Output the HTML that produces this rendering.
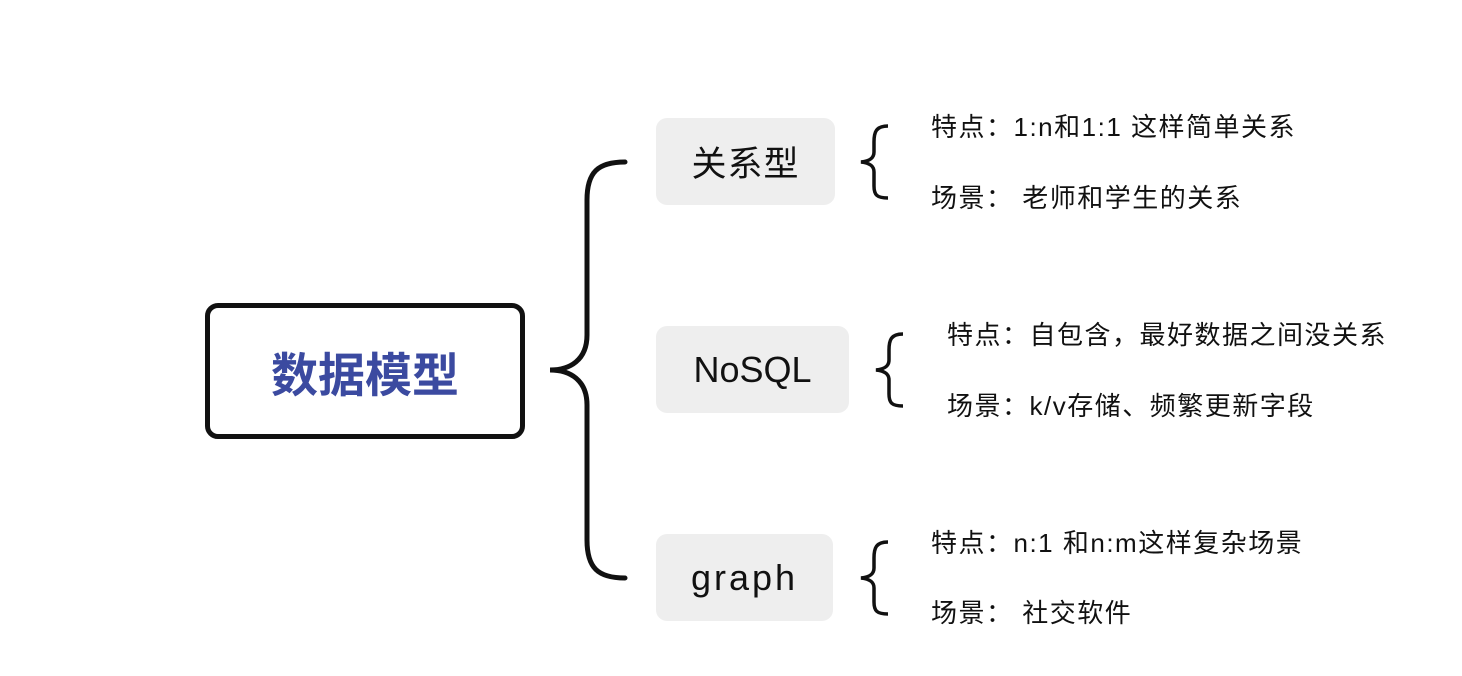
<!DOCTYPE html>
<html><head><meta charset="utf-8"><style>
body{margin:0;width:1462px;height:676px;background:#fff;position:relative;overflow:hidden;font-family:"Liberation Sans","Noto Sans CJK SC",sans-serif;color:#111}
.a{position:absolute;white-space:nowrap}
.main{left:205px;top:303px;width:310px;height:126px;border:5px solid #111;border-radius:13px;display:flex;align-items:center;justify-content:center;font-size:47px;font-weight:bold;color:#3b4aa0}
.n{background:#eeeeee;border-radius:11px;display:flex;align-items:center;justify-content:center;font-size:36px;height:87px}
.t{font-size:26px;line-height:30px;letter-spacing:1.5px}
</style></head><body>
<svg class="a" style="left:0;top:0" width="1462" height="676">
<g fill="none" stroke="#111" stroke-width="5" stroke-linecap="round">
<path d="M625 162 C598 162 587 172 587 200 L587 335 C587 360 570 370 550 370 C570 370 587 380 587 405 L587 540 C587 568 598 578 625 578"/>
</g>
<g fill="none" stroke="#111" stroke-width="3.5">
<path d="M888 126 C876 126 874 132 874 142 L874 152 C874 158 870 161 861 162 C870 163 874 166 874 172 L874 186 C874 195 877 198 888 198"/>
<path d="M903 334 C891 334 889 340 889 350 L889 360 C889 366 885 369 876 370 C885 371 889 374 889 380 L889 394 C889 403 892 406 903 406"/>
<path d="M888 542 C876 542 874 548 874 558 L874 568 C874 574 870 577 861 578 C870 579 874 582 874 588 L874 602 C874 611 877 614 888 614"/>
</g>
</svg>
<div class="a main">数据模型</div>
<div class="a n" style="left:656px;top:118px;width:179px;font-size:35px;letter-spacing:1px">关系型</div>
<div class="a n" style="left:656px;top:326px;width:193px">NoSQL</div>
<div class="a n" style="left:656px;top:534px;width:177px;letter-spacing:3px">graph</div>
<div class="a t" style="left:931px;top:112px">特点：1:n和1:1 这样简单关系</div>
<div class="a t" style="left:931px;top:183px">场景：&nbsp;老师和学生的关系</div>
<div class="a t" style="left:947px;top:320px">特点：自包含，最好数据之间没关系</div>
<div class="a t" style="left:947px;top:391px">场景：k/v存储、频繁更新字段</div>
<div class="a t" style="left:931px;top:528px">特点：n:1 和n:m这样复杂场景</div>
<div class="a t" style="left:931px;top:598px">场景：&nbsp;社交软件</div>
</body></html>
